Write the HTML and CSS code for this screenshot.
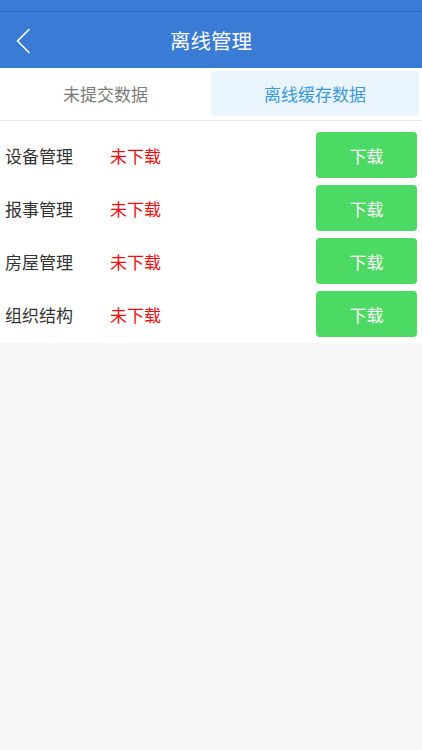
FILE: index.html
```html
<!DOCTYPE html>
<html lang="zh-CN">
<head>
<meta charset="utf-8">
<title>离线管理</title>
<link rel="stylesheet" href="styles.css">
</head>
<body>
<div class="page">
  <header class="header">
    <div class="status"></div>
    <div class="navbar">
      <span class="back">
        <svg width="16" height="26" viewBox="0 0 16 26"><polyline points="14,1.5 2.5,13 14,24.5" fill="none" stroke="#ffffff" stroke-width="1.6" stroke-linecap="round" stroke-linejoin="round"/></svg>
      </span>
      <h1 class="title">离线管理</h1>
    </div>
  </header>
  <nav class="tabs">
    <div class="tab">未提交数据</div>
    <div class="tab tab-active">离线缓存数据</div>
  </nav>
  <section class="list">
    <div class="row">
      <span class="name">设备管理</span>
      <span class="state">未下载</span>
      <button class="btn">下载</button>
    </div>
    <div class="row">
      <span class="name">报事管理</span>
      <span class="state">未下载</span>
      <button class="btn">下载</button>
    </div>
    <div class="row">
      <span class="name">房屋管理</span>
      <span class="state">未下载</span>
      <button class="btn">下载</button>
    </div>
    <div class="row">
      <span class="name">组织结构</span>
      <span class="state">未下载</span>
      <button class="btn">下载</button>
    </div>
  </section>
</div>
</body>
</html>
```

FILE: styles.css
```css
* { box-sizing: border-box; }
html, body {
  margin: 0;
  padding: 0;
  background: #f7f7f7;
  font-family: "Noto Sans CJK SC", "Noto Sans", sans-serif;
}
.page {
  width: 422px;
  min-height: 750px;
  background: #f7f7f7;
}
.header {
  background: #3a7bd5;
}
.status {
  height: 12px;
  border-bottom: 1px solid #2f6bc0;
}
.navbar {
  height: 56px;
  display: flex;
  align-items: center;
  justify-content: center;
  position: relative;
}
.back {
  position: absolute;
  left: 15px;
  top: 16px;
  display: flex;
}
.title {
  margin: 0;
  color: #ffffff;
  font-size: 20.5px;
  font-weight: 400;
  line-height: 1;
}
.tabs {
  display: flex;
  background: #ffffff;
  height: 53px;
  padding: 3px 3px 4px 0;
  border-bottom: 1px solid #e6e6e6;
}
.tab {
  flex: 1;
  display: flex;
  align-items: center;
  justify-content: center;
  font-size: 17px;
  color: #7a7a7a;
  border-radius: 4px;
}
.tab-active {
  background: #eaf4fc;
  color: #3d9ad8;
  flex: 0 0 208px;
}
.tab:first-child {
  flex: 0 0 211px;
}
.list {
  background: #ffffff;
  padding: 11px 5px 6px 5px;
  display: flex;
  flex-direction: column;
  gap: 7px;
}
.row {
  display: flex;
  align-items: center;
  height: 46px;
}
.name {
  width: 105px;
  font-size: 17px;
  color: #333333;
}
.state {
  font-size: 17px;
  color: #f00d0d;
}
.btn {
  margin-left: auto;
  width: 101px;
  height: 46px;
  border: none;
  border-radius: 4px;
  background: #4cd964;
  color: #ffffff;
  font-family: inherit;
  font-size: 17px;
  padding: 0;
}
```
